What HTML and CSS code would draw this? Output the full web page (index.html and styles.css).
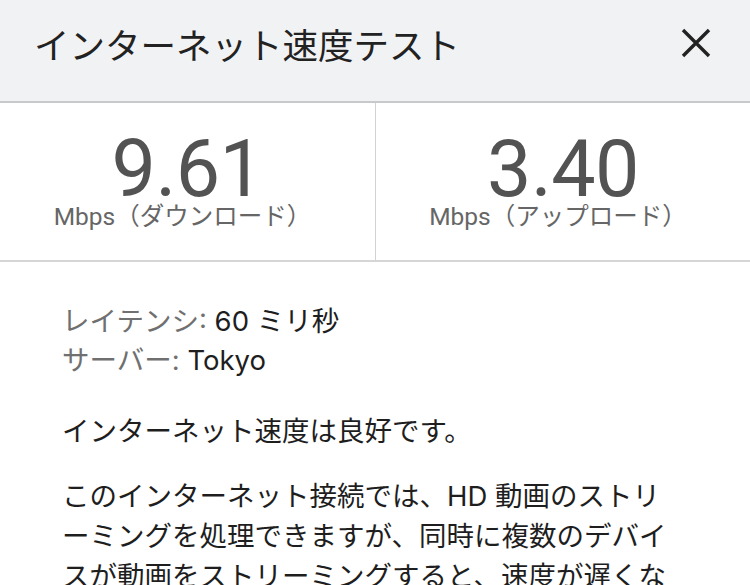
FILE: index.html
```html
<!DOCTYPE html>
<html lang="ja">
<head>
<meta charset="utf-8">
<link rel="stylesheet" href="styles.css">
</head>
<body>
<div class="sheet">
  <header class="head">
    <h1 class="title">インターネット速度テスト</h1>
    <button class="close" aria-label="閉じる">
      <svg width="30" height="30" viewBox="0 0 30 30"><path d="M2 2 L28 28 M28 2 L2 28" stroke="#222" stroke-width="3.4" stroke-linecap="butt" fill="none"/></svg>
    </button>
  </header>
  <section class="stats">
    <div class="stat">
      <div class="num">9.61</div>
      <div class="unit">Mbps（ダウンロード）</div>
    </div>
    <div class="stat">
      <div class="num">3.40</div>
      <div class="unit">Mbps（アップロード）</div>
    </div>
  </section>
  <section class="body">
    <div class="info">
      <div><span class="label">レイテンシ:</span> <span class="val">60 ミリ秒</span></div>
      <div><span class="label">サーバー:</span> <span class="val">Tokyo</span></div>
    </div>
    <p class="msg">インターネット速度は良好です。</p>
    <p class="msg desc">このインターネット接続では、HD 動画のストリーミングを処理できますが、同時に複数のデバイスが動画をストリーミングすると、速度が遅くなることがあります。</p>
  </section>
</div>
</body>
</html>
```

FILE: styles.css
```css
* { box-sizing: border-box; }
html, body { margin: 0; padding: 0; background: #fff; }
body {
  font-family: Inter, "Noto Sans CJK JP", sans-serif;
  width: 750px;
  height: 585px;
  overflow: hidden;
}
.sheet { width: 750px; }
.head {
  height: 103px;
  background: #f1f2f4;
  border-bottom: 2px solid #c8c9cb;
  display: flex;
  align-items: center;
  justify-content: space-between;
  padding: 0 39px 15px 34px;
}
.title {
  margin: 0;
  font-family: "Noto Sans CJK JP", sans-serif;
  font-weight: 400;
  font-size: 35.5px;
  color: #222;
}
.close {
  border: 0;
  background: transparent;
  padding: 0;
  width: 30px;
  height: 30px;
  display: flex;
}
.stats {
  display: grid;
  grid-template-columns: 375px 1fr;
  height: 159px;
  border-bottom: 2px solid #d6d6d6;
}
.stat {
  display: flex;
  flex-direction: column;
  align-items: center;
  padding-top: 33px;
}
.stat + .stat { border-left: 1px solid #d2d2d2; }
.num {
  font-family: Roboto, sans-serif;
  font-size: 79px;
  line-height: 66px;
  color: #535353;
  letter-spacing: -0.5px;
}
.unit {
  font-family: Roboto, "Noto Sans CJK JP", sans-serif;
  font-size: 24.5px;
  line-height: 30px;
  color: #666;
  margin-left: -10px;
}
.body {
  padding: 40px 73px 0 62px;
  font-family: Inter, "Noto Sans CJK JP", sans-serif;
  font-size: 27.5px;
  color: #1e1e1e;
}
.info { line-height: 39px; }
.label { color: #707070; }
.val { color: #1e1e1e; }
.msg {
  margin: 31px 0 0 0;
  line-height: 40px;
}
.desc { margin-top: 25px; line-break: loose; }
```
